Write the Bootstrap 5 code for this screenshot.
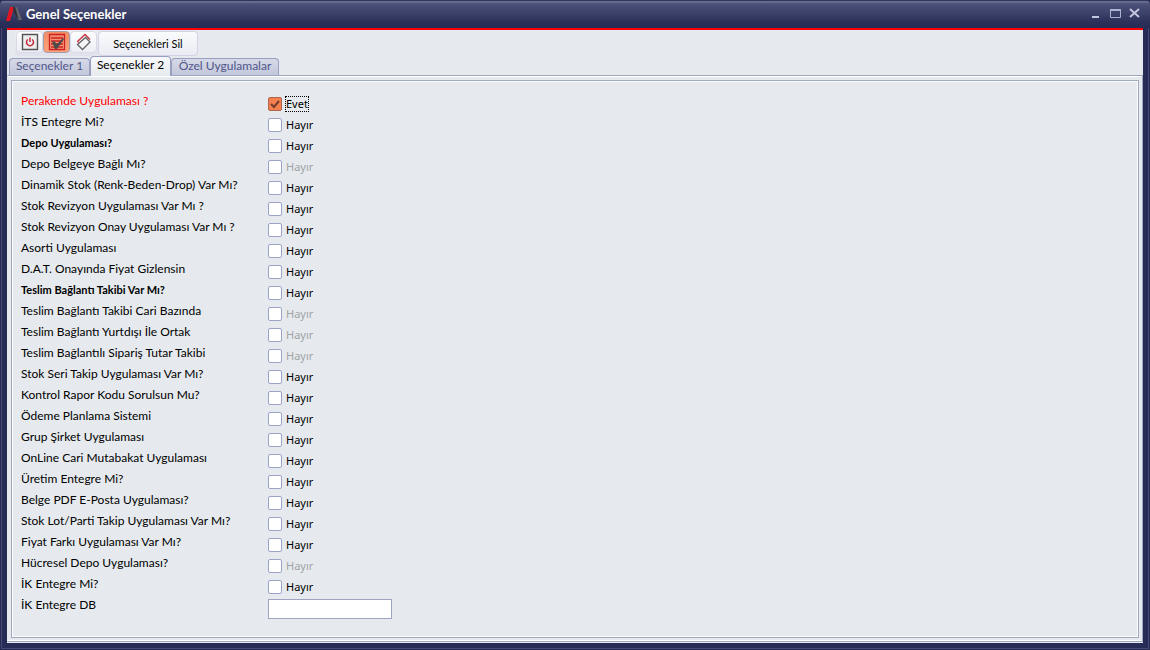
<!DOCTYPE html>
<html lang="tr">
<head>
<meta charset="utf-8">
<meta name="viewport" content="width=device-width, initial-scale=1">
<title>Genel Seçenekler</title>
<link href="https://cdn.jsdelivr.net/npm/bootstrap@5.3.0/dist/css/bootstrap.min.css" rel="stylesheet">
<style>
  body { background: #272c55; color: #000; font: 12px/21px "Noto Sans", "Open Sans", sans-serif; }
  .app-window { min-height: 100vh; padding: 0 7px 7px; border-radius: 5px 5px 0 0; background: #262c55; box-shadow: inset 0 0 0 1px #272b50, inset 0 0 0 2px #454a7a; }
  .title-bar { height: 28px; margin: 0 -7px; padding: 0 7px 0 6px; border-radius: 5px 5px 0 0; background: linear-gradient(#30355c 0 1px, #686d92 1px 2px, #4b5079 4px, #3b4069 14px, #2a3059 22px, #262c55); }
  .title-bar h1 { font: bold 13px/28px "Lato", sans-serif; color: #fff; }
  .caption-btn { width: 16px; height: 16px; }
  .surface { background: #e6eaee; border-top: 2px solid #f00; }
  .tool-strip { height: 26px; padding-left: 8px; }
  .icon-strip { height: 26px; padding: 1px 1px 0; background: linear-gradient(#eef0f5, #dfe1ec); border-radius: 4px; }
  .tool-btn { width: 27px; height: 22px; border: 1px solid #d9dae8; border-radius: 4px; background: linear-gradient(#fdfdfe, #eceef5); }
  .tool-btn.pressed { border: 1px solid #a59da9; background: linear-gradient(#f28c64, #fba27b); }
  .text-btn { width: 100px; height: 25px; margin-top: 1px; border: 1px solid #d2d3e4; border-radius: 4px; background: linear-gradient(#fafbfd, #eaecf3); font: 11px "Lato", sans-serif; }
  .tab-strip { height: 19px; padding-left: 2px; }
  .tab-btn { height: 17px; line-height: 14px; padding: 0 5px 2px; border: 1px solid #9a9fc0; border-bottom: 0; border-radius: 4px 4px 0 0; background: linear-gradient(#d6d9e6, #c3c7dc); color: #51568a; font-family: "Lato", sans-serif; }
  .tab-btn.active { height: 20px; padding: 0 4px 4px; background: linear-gradient(#f8f9fb, #e6eaee); color: #000; z-index: 1; margin-bottom: -1px; }
  .tab-1 { width: 81px; } .tab-2 { width: 81px; } .tab-3 { width: 108px; }
  .tab-page { border: 1px solid #9da7bd; border-left-color: #e6eaee; padding: 4px 3px 3px; box-shadow: inset 0 1px #fff, inset 0 -1px #fff; margin-bottom: 1px; }
  .option-area { border: 1px solid #9faabd; box-shadow: inset 0 0 0 1px #fbfcfd; padding: 9px; }
  .option-row { height: 21px; }
  .option-name { width: 247px; font-family: "Lato", sans-serif; }
  .option-name.alert-name { color: #f00; }
  .option-name.fw-bold { font-size: 11px; }
  .option-value { margin-top: 7px; }
  .option-row input[type=checkbox] { width: 14px; height: 14px; margin: 0 4px 0 0; border: 1px solid #9da3c6; border-radius: 2px; background-color: #fff; box-shadow: none; opacity: 1; }
  .option-row input[type=checkbox]:checked { border-color: #b0664e; background: #f67f50 url("data:image/svg+xml,%3Csvg xmlns='http://www.w3.org/2000/svg' viewBox='0 0 12 12'%3E%3Cpath d='M2 6l3 3 5-6' fill='none' stroke='%23713c2b' stroke-width='2'/%3E%3C/svg%3E"); }
  .answer { font-size: 11px; line-height: 14px; }
  .option-row input:disabled ~ .answer { color: #a0a2a5; opacity: 1; }
  .focused { outline: 1px dotted #000; }
  .db-input { width: 124px; height: 20px; margin-top: 5px; border: 1px solid #9da3c0; background: #fff; padding: 0 4px; }
</style>
</head>
<body>
<div class="app-window d-flex flex-column">
  <header class="title-bar d-flex align-items-center">
    <svg width="16" height="16" viewBox="0 0 16 16" aria-hidden="true"><path d="M4 1h4L4 15H0z" fill="#e21420"/><path d="M8 1h3l5 13h-4z" fill="#66666c"/><path d="M7 1h2l4 13-5-7z" fill="#303037"/></svg>
    <h1 class="mb-0 ms-1 me-auto">Genel Seçenekler</h1>
    <div class="d-flex gap-1">
      <button class="caption-btn btn p-0 border-0 d-flex" aria-label="Küçült"><svg width="16" height="16"><path d="M5 10h7v2H5z" fill="#c3c6de"/></svg></button>
      <button class="caption-btn btn p-0 border-0 d-flex" aria-label="Büyüt"><svg width="16" height="16"><path d="M3.500 3.500h10v8h-10z" fill="none" stroke="#aeb2d0"/><path d="M3 3h11v2H3z" fill="#aeb2d0"/></svg></button>
      <button class="caption-btn btn p-0 border-0 d-flex" aria-label="Kapat"><svg width="16" height="16"><path d="M3 3l9 8m0-8l-9 8" stroke="#c3c6de" stroke-width="2"/></svg></button>
    </div>
  </header>
  <main class="surface flex-grow-1 d-flex flex-column">
    <div class="tool-strip d-flex">
      <div class="icon-strip d-flex">
        <button class="tool-btn p-0 d-flex justify-content-center align-items-center" aria-label="Çıkış"><svg width="18" height="18"><path d="M1.500 1.500h15v15h-15z" fill="#eee" stroke="#555" stroke-width="1.400"/><path d="M6.800 6.500a3.500 3.500 0 1 0 4.400 0M9 4.500V9" fill="none" stroke="#c22d3b" stroke-width="1.500"/></svg></button>
        <button class="tool-btn pressed p-0 d-flex justify-content-center align-items-center" aria-label="Kaydet"><svg width="18" height="18"><path d="M1.500 1.500h15v15h-15zM3 5h12M3 8h12M3 11h12M3 14h12" fill="none" stroke="#ca2027" stroke-width="1.300"/><path d="M4 9l2-1 3 3 6-6 1 1-7 10H7z" fill="#4c4c4c"/></svg></button>
        <button class="tool-btn p-0 d-flex justify-content-center align-items-center" aria-label="Temizle"><svg width="18" height="18"><path d="M2.500 8.500l7.500-7 5 5" fill="none" stroke="#c9343e" stroke-width="1.400"/><path d="M2.500 11.500L10.500 4.500 15 9 7.500 16.500z" fill="#f5f5f8" stroke="#65656b" stroke-width="1.400"/><path d="M2.500 8l1 2" stroke="#c9343e"/></svg></button>
      </div>
      <button class="text-btn p-0">Seçenekleri Sil</button>
    </div>
    <div class="tab-strip d-flex align-items-end" role="tablist">
      <button class="tab-btn tab-1 text-nowrap" role="tab">Seçenekler 1</button>
      <button class="tab-btn tab-2 text-nowrap active" role="tab" aria-selected="true">Seçenekler 2</button>
      <button class="tab-btn tab-3 text-nowrap" role="tab">Özel Uygulamalar</button>
    </div>
    <div class="tab-page flex-grow-1 d-flex flex-column">
      <form class="option-area flex-grow-1" id="options">
        <div class="option-row d-flex">
          <label class="option-name" for="db">İK Entegre DB</label>
          <input class="db-input" id="db" type="text">
        </div>
      </form>
    </div>
  </main>
</div>
<script src="https://cdn.jsdelivr.net/npm/bootstrap@5.3.0/dist/js/bootstrap.bundle.min.js"></script>
<script>
  const options = [
    ["Perakende Uygulaması ?", "checked"], ["İTS Entegre Mi?"], ["Depo Uygulaması?", "fw-bold"],
    ["Depo Belgeye Bağlı Mı?", "disabled"], ["Dinamik Stok (Renk-Beden-Drop) Var Mı?"],
    ["Stok Revizyon Uygulaması Var Mı ?"], ["Stok Revizyon Onay Uygulaması Var Mı ?"], ["Asorti Uygulaması"],
    ["D.A.T. Onayında Fiyat Gizlensin"], ["Teslim Bağlantı Takibi Var Mı?", "fw-bold"],
    ["Teslim Bağlantı Takibi Cari Bazında", "disabled"], ["Teslim Bağlantı Yurtdışı İle Ortak", "disabled"],
    ["Teslim Bağlantılı Sipariş Tutar Takibi", "disabled"], ["Stok Seri Takip Uygulaması Var Mı?"],
    ["Kontrol Rapor Kodu Sorulsun Mu?"], ["Ödeme Planlama Sistemi"], ["Grup Şirket Uygulaması"],
    ["OnLine Cari Mutabakat Uygulaması"], ["Üretim Entegre Mi?"], ["Belge PDF E-Posta Uygulaması?"],
    ["Stok Lot/Parti Takip Uygulaması Var Mı?"], ["Fiyat Farkı Uygulaması Var Mı?"],
    ["Hücresel Depo Uygulaması?", "disabled"], ["İK Entegre Mi?"]
  ];
  const rows = options.map(([name, flags = ""], i) => {
    const on = flags.includes("checked"), off = flags.includes("disabled");
    const tone = on ? "alert-name" : flags.includes("fw-bold") ? "fw-bold" : "";
    return `<div class="option-row d-flex">
      <label class="option-name ${tone}" for="opt${i}">${name}</label>
      <div class="option-value d-flex align-items-center">
        <input class="form-check-input" type="checkbox" id="opt${i}" ${on ? "checked" : ""} ${off ? "disabled" : ""}>
        <label class="answer ${on ? "focused" : ""}" for="opt${i}">${on ? "Evet" : "Hayır"}</label>
      </div>
    </div>`;
  });
  document.getElementById("options").insertAdjacentHTML("afterbegin", rows.join(""));
</script>
</body>
</html>
